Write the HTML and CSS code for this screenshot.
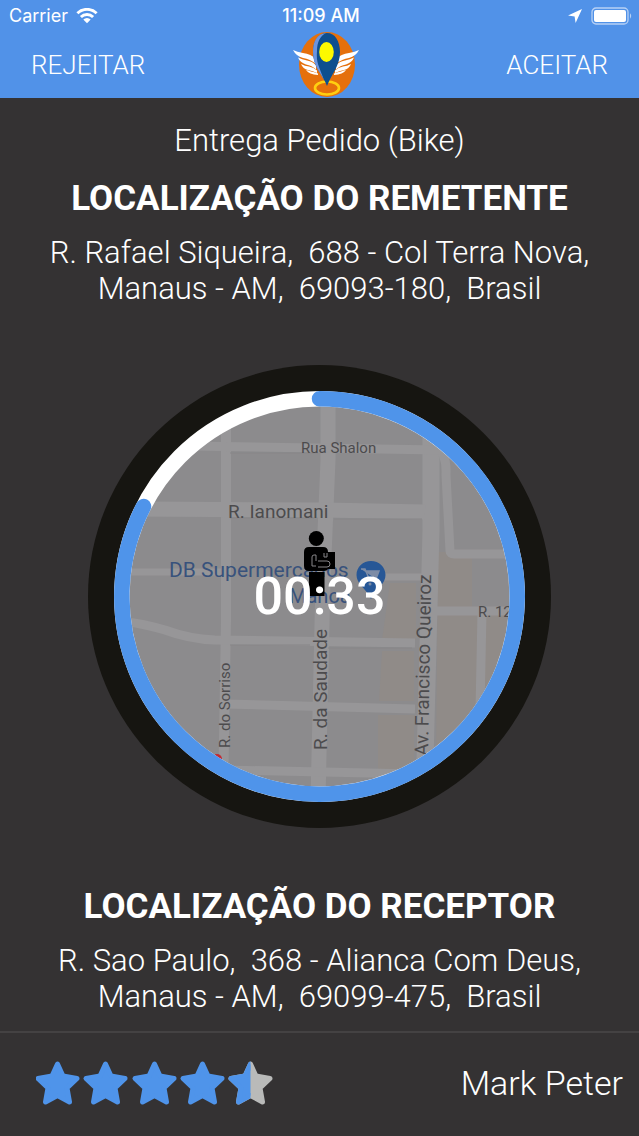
FILE: index.html
```html
<!DOCTYPE html>
<html lang="pt-BR">
<head>
<meta charset="utf-8">
<meta name="viewport" content="width=device-width, initial-scale=1">
<title>Entrega Pedido</title>
<link rel="stylesheet" href="styles.css">
</head>
<body>
<header class="top">
  <div class="status">
    <div class="status-left">
      <span>Carrier</span>
      <svg class="wifi" viewBox="0 0 22 16" aria-hidden="true">
        <path d="M1.4 5.3a13.6 13.6 0 0 1 19.2 0M4.9 9a8.6 8.6 0 0 1 12.2 0" fill="none" stroke="#fff" stroke-width="2.9"/>
        <path d="M11 15.3 7.3 11.6a5.2 5.2 0 0 1 7.4 0z" fill="#fff"/>
      </svg>
    </div>
    <span class="clock">11:09 AM</span>
    <div class="status-right">
      <svg class="arrow" viewBox="0 0 16 16" aria-hidden="true"><path d="M15 1 8.6 15 7.6 8.5 1 7.4z" fill="#fff"/></svg>
      <svg class="battery" viewBox="0 0 42 18" aria-hidden="true">
        <rect x="1" y="1" width="36" height="16" rx="4" fill="none" stroke="#b7d1f5" stroke-width="1.3"/>
        <rect x="3" y="3" width="32" height="12" rx="2" fill="#fff"/>
        <path d="M39 6.3q2.4 2.700 0 5.400z" fill="#b7d1f5"/>
      </svg>
    </div>
  </div>
  <nav class="actions">
    <button class="action" type="button">REJEITAR</button>
    <svg class="logo" viewBox="293 32 68 66" role="img" aria-label="Logo">
      <ellipse cx="328" cy="64.500" rx="28" ry="32.500" fill="#e5700c"/>
      <g id="wing" fill="#fff">
        <path d="M294 50q4 2 10 3 8 1 13 6v5q-6-5-13-6-7-2-10-8z"/>
        <path d="M299 57.500q4 2 9 3 6 1 9 5v4q-4-4-10-5-6-2-8-7z"/>
        <path d="M302 64q4 2 8 2.500 5 1 8 4v2.500q-4-2-9-3-5-1-7-6z"/>
        <path d="M307 70q4 1 12 3.500v1.500q-9-.500-12-5z"/>
      </g>
      <use href="#wing" transform="matrix(-1 0 0 1 654 0)"/>
      <ellipse cx="328" cy="88" rx="12" ry="6.500" fill="none" stroke="#ffcf10" stroke-width="2.600"/>
      <path d="M328 33c-9 0-14 8-14 19 0 15 10 23 14 34 4-11 13-20 13-34 0-11-5-19-13-19z" fill="#0d4f8f"/>
      <path d="M327 33c-9 1-13 8-13 19 0 13 7 20 11 28-5-14-8-17-7-29 0-9 3-15 9-18z" fill="#6c95e0"/>
      <ellipse cx="327.500" cy="52" rx="7.300" ry="10" fill="#fdf900"/>
    </svg>
    <button class="action" type="button">ACEITAR</button>
  </nav>
</header>

<main class="main">
  <section class="place">
    <p class="order">Entrega Pedido (Bike)</p>
    <h1 class="place-title">LOCALIZAÇÃO DO REMETENTE</h1>
    <p class="address">R. Rafael Siqueira,&nbsp; 688 - Col Terra Nova,<br>Manaus - AM,&nbsp; 69093-180,&nbsp; Brasil</p>
  </section>

  <div class="dial">
    <svg class="dial-map" viewBox="88 365 463 463" aria-hidden="true">
      <defs><clipPath id="face"><circle cx="319.500" cy="596.500" r="194"/></clipPath></defs>
      <circle cx="319.500" cy="596.500" r="231.500" fill="#161511"/>
      <g clip-path="url(#face)">
        <rect x="120" y="395" width="400" height="400" fill="#8c8b8d"/>
        <path d="M390 583h26v57h-34zM382 651h32v50h-35zM378 715h36v55h-36zM438 552h34v62h34v90l-70 60z" fill="#908b88"/>
        <g fill="none" stroke="#979698" stroke-width="9">
          <path d="M226 400v220l-3 180" stroke-width="10"/>
          <path d="M328 400v60l-5 120-5 220" stroke-width="15"/>
          <path d="M431 400v130l-7 270" stroke-width="17"/>
          <path d="M436 445q11 8 10 30l4 76q0 3 4 3h66"/>
          <path d="M190 446l250 4"/>
          <path d="M130 509l195 1 100 2" stroke-width="15"/>
          <path d="M120 572h106M380 577h42" stroke-width="7"/>
          <path d="M120 621q20 2 45 9 24 9 50 10l200 3M434 611h80M482 612l-2 98"/>
          <path d="M225 704l190 5M225 770l190 4"/>
        </g>
        <path d="M230 453h88M230 518h84M334 519h88M230 645h80M328 648h84" fill="none" stroke="#878688"/>
        <circle cx="217" cy="759" r="5" fill="#c22a32"/>
        <g class="streets">
          <text x="301" y="453" font-size="15">Rua Shalon</text>
          <text x="228" y="518" font-size="19">R. Ianomani</text>
          <text x="478" y="617" font-size="15">R. 12</text>
          <text transform="translate(230 748) rotate(-90)" font-size="15">R. do Sorriso</text>
          <text transform="translate(327 750) rotate(-90)" font-size="19">R. da Saudade</text>
          <text transform="translate(428 756) rotate(-89)" font-size="19">Av. Francisco Queiroz</text>
        </g>
        <g class="shop">
          <text x="169" y="577" font-size="21">DB Supermercados</text>
          <text x="289" y="603" font-size="20">Manoa</text>
        </g>
        <path d="M371 561c8 0 14.500 6 14.500 14 0 9-8 12-14.500 24-6-12-14.500-15-14.500-24 0-8 6.500-14 14.500-14z" fill="#275796"/>
        <path d="M361 569h4l5 12h9M366 571h13l-3 8h-7z" fill="#7d8ca6" stroke="#7d8ca6" stroke-width="1.500"/>
        <circle cx="370" cy="584" r="1.500" fill="#7d8ca6"/><circle cx="378" cy="584" r="1.500" fill="#7d8ca6"/>
      </g>
      <g>
        <circle cx="316.300" cy="538.500" r="7.500"/>
        <path d="M309 547h14q5 0 5 5h7v17h-7q-1 2-4 2h-15q-5 0-5-5v-14q0-5 5-5z"/>
        <path d="M309 572h15.500v24h-15.500z"/>
        <path d="M312 566v-9q0-2 2-2h2v6M312 566h4M318 561h9q3 0 3 3t-3 3h-9M324 553v4h3v-4" fill="none" stroke="#88878a" stroke-width="1"/>
      </g>
      <g fill="none" stroke-width="15.500">
        <circle cx="319.500" cy="596.500" r="197.700" stroke="#fff"/>
        <path d="M319.500 398.800A197.700 197.700 0 1 1 143.500 506.500" stroke="#4f94ea" stroke-linecap="round"/>
      </g>
    </svg>
    <time class="timer">00:33</time>
  </div>

  <section class="place">
    <h2 class="place-title">LOCALIZAÇÃO DO RECEPTOR</h2>
    <p class="address">R. Sao Paulo,&nbsp; 368 - Alianca Com Deus,<br>Manaus - AM,&nbsp; 69099-475,&nbsp; Brasil</p>
  </section>
</main>

<footer class="client">
  <svg class="stars" viewBox="0 0 238 46" role="img" aria-label="4,5 de 5 estrelas">
    <defs>
      <path id="star" d="M21.500 4 27 16 41 18.500 31 28 33.500 42 21.500 35.500 9.500 42 12 28 2 18.500 16 16z" stroke-width="5" stroke-linejoin="round"/>
      <clipPath id="half"><path d="M-2-2h23.500v50h-23.500z"/></clipPath>
    </defs>
    <g fill="#4f94ea" stroke="#4f94ea">
      <use href="#star"/><use href="#star" x="48"/><use href="#star" x="97"/><use href="#star" x="145"/>
    </g>
    <g transform="translate(193 0)">
      <use href="#star" fill="#b9bab9" stroke="#b9bab9"/>
      <use href="#star" fill="#4f94ea" stroke="#4f94ea" clip-path="url(#half)"/>
    </g>
  </svg>
  <span class="client-name">Mark Peter</span>
</footer>
</body>
</html>
```
FILE: styles.css
```css
* { box-sizing: border-box; }

body {
  margin: 0;
  min-height: 100vh;
  display: flex;
  flex-direction: column;
  background: #343233;
  color: #fff;
  font-family: Roboto, "Liberation Sans", sans-serif;
  font-weight: 300;
}

h1, h2, p { margin: 0; }

.top { background: #5192e8; }

.status {
  display: grid;
  grid-template-columns: 1fr auto 1fr;
  align-items: center;
  height: 32px;
  padding: 0 6px 0 9px;
  font: 400 18px/32px Inter, sans-serif;
}
.status-left, .status-right { display: flex; align-items: center; gap: 8px; }
.status-right { justify-content: flex-end; }
.clock { font-weight: 500; }
.wifi { width: 22px; height: 16px; }
.arrow { width: 16px; height: 16px; }
.battery { width: 42px; height: 18px; }

.actions {
  display: flex;
  align-items: center;
  justify-content: space-between;
  height: 66px;
  padding: 0 31px;
}
.action {
  padding: 0;
  border: 0;
  background: none;
  color: inherit;
  font: 300 26px/32px Roboto, sans-serif;
  cursor: pointer;
}
.logo { width: 68px; height: 66px; }

.main {
  flex: 1;
  display: flex;
  flex-direction: column;
  align-items: center;
  justify-content: space-between;
  padding: 23px 16px 16px;
  text-align: center;
}
.order { font-size: 31px; line-height: 40px; margin-bottom: 16px; }
.place-title { font-size: 35px; line-height: 44px; font-weight: 700; margin-bottom: 14px; }
.address { font-size: 31px; line-height: 36px; }

.dial { position: relative; width: 100%; max-width: 463px; }
.dial-map { display: block; width: 100%; }
.streets { fill: #4c4b4d; font-family: Roboto, sans-serif; font-weight: 400; }
.shop { fill: #38527c; font-family: Roboto, sans-serif; font-weight: 400; }
.timer {
  position: absolute;
  inset: 0;
  display: grid;
  place-items: center;
  font-size: 52px;
  font-weight: 500;
}

.client {
  display: flex;
  align-items: center;
  justify-content: space-between;
  height: 105px;
  padding: 0 16px 4px 36px;
  border-top: 2px solid #444243;
}
.stars { width: 238px; height: 46px; }
.client-name { font-size: 34px; line-height: 40px; }
```
